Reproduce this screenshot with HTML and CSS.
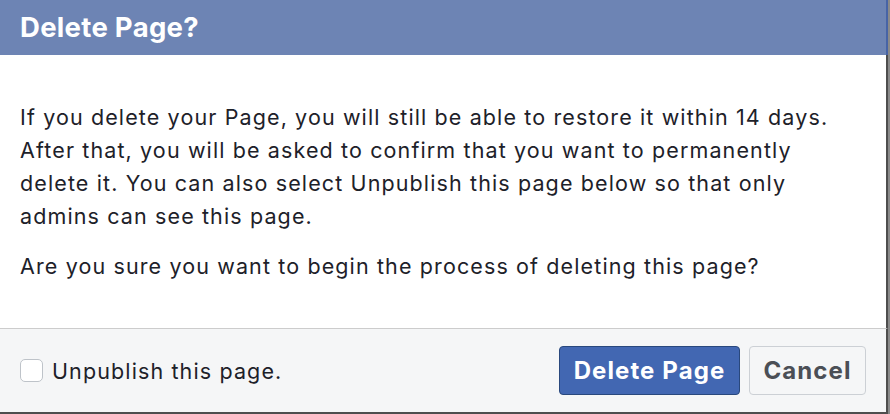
FILE: index.html
```html
<!DOCTYPE html>
<html lang="en">
<head>
    <meta charset="UTF-8">
    <meta name="viewport" content="width=device-width, initial-scale=1.0">
    <title>Delete Page?</title>
    <link rel="stylesheet" href="styles.css">
</head>
<body>
    <div class="dialog">
        <div class="dialog-header">
            <h2>Delete Page?</h2>
        </div>

        <div class="dialog-body">
            <p>If you delete your Page, you will still be able to restore it within 14 days. After that, you will be asked to confirm that you want to permanently delete it. You can also select Unpublish this page below so that only admins can see this page.</p>
            <p>Are you sure you want to begin the process of deleting this page?</p>
        </div>

        <div class="dialog-footer">
            <label class="check">
                <input type="checkbox" id="unpublish">
                <span class="box"></span>
                Unpublish this page.
            </label>
            <div class="button-group">
                <button class="primary">Delete Page</button>
                <button class="cancel">Cancel</button>
            </div>
        </div>
    </div>
</body>
</html>
```

FILE: styles.css
```css
* {
    box-sizing: border-box;
}
body {
    margin: 0;
    background: #8a8a8a;
    font-family: Inter, 'Noto Sans', Arial, sans-serif;
    color: #1d2129;
}
.dialog {
    width: 888px;
}
.dialog-header {
    background: #6d84b4;
    height: 55px;
    border-right: 2px solid #4764a6;
    display: flex;
    align-items: center;
    padding: 0 20px 1px;
}
.dialog-header h2 {
    margin: 0;
    color: #fff;
    font-size: 27.5px;
    font-weight: 700;
    letter-spacing: 0.3px;
}
.dialog-body {
    background: #fff;
    border-right: 2px solid #4e4e4e;
    padding: 46px 20px 0;
    height: 273px;
}
.dialog-body p {
    margin: 0 0 17px;
    font-size: 21.5px;
    line-height: 33px;
    letter-spacing: 1.12px;
}
.dialog-footer {
    background: #f5f6f7;
    border-top: 1px solid #ccc;
    border-right: 2px solid #4e4e4e;
    border-bottom: 2px solid #4e4e4e;
    height: 86px;
    display: flex;
    align-items: center;
    justify-content: space-between;
    padding: 0 20px;
}
.check {
    display: flex;
    align-items: center;
    font-size: 21.5px;
    letter-spacing: 1.12px;
    color: #1d2129;
    cursor: pointer;
}
.check input {
    display: none;
}
.box {
    width: 23px;
    height: 23px;
    border: 1px solid #bec3c9;
    border-radius: 5px;
    background: #fff;
    margin-right: 9px;
}
.button-group {
    display: flex;
    gap: 9px;
}
button {
    height: 49px;
    padding: 0;
    border-radius: 4px;
    font-family: inherit;
    font-size: 24px;
    font-weight: 700;
    letter-spacing: 1.1px;
    cursor: pointer;
}
button.primary {
    width: 181px;
    background: #4267b2;
    border: 1px solid #29487d;
    color: #fff;
}
button.cancel {
    width: 117px;
    background: #f5f6f7;
    border: 1px solid #ccd0d5;
    color: #4b4f56;
}
```
